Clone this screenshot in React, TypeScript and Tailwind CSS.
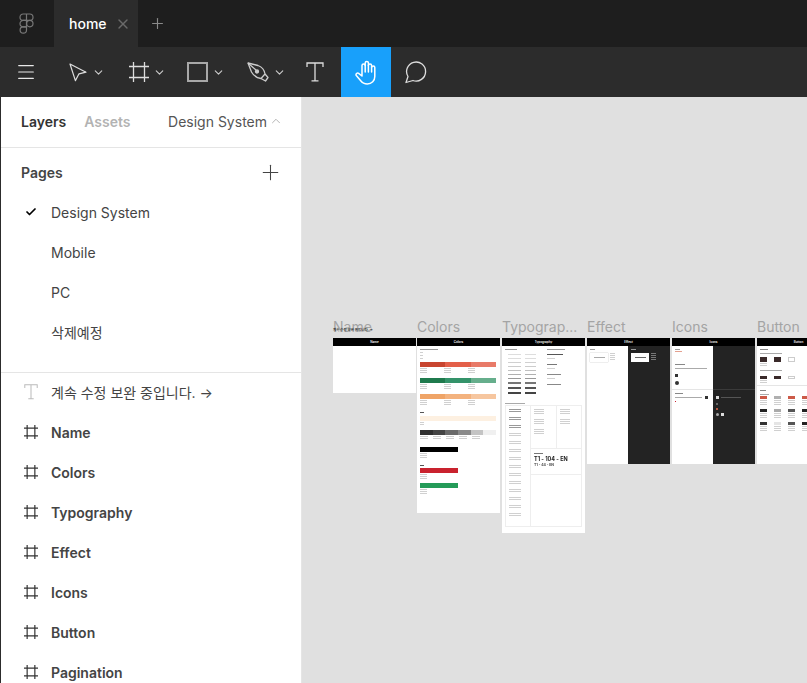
import React from 'react';
import { Check, ChevronDown, ChevronUp, Menu, Plus, X } from 'lucide-react';

const FONT = "font-['Inter','Noto_Sans_CJK_KR',sans-serif]";

const pages = ['Design System', 'Mobile', 'PC', '삭제예정'];
const layers = ['Name', 'Colors', 'Typography', 'Effect', 'Icons', 'Button', 'Pagination'];

// toolbar glyphs that lucide doesn't have in the right shape
const FigmaLogo = () => (
  <svg width="15" height="21" viewBox="0 0 15 21" fill="none" stroke="#777" strokeWidth="1.2">
    <path d="M7.500 1H4.200a3.200 3.200 0 0 0 0 6.400h3.300V1zM7.500 1h3.300a3.200 3.200 0 0 1 0 6.400H7.500V1z" />
    <path d="M7.500 7.400H4.200a3.200 3.200 0 0 0 0 6.400h3.300V7.400z" />
    <circle cx="10.800" cy="10.600" r="3.200" />
    <path d="M7.500 13.800H4.200a3.200 3.200 0 1 0 3.300 3.200v-3.200z" />
  </svg>
);

const MoveIcon = () => (
  <svg width="18" height="19" viewBox="0 0 18 19" fill="none" stroke="#ddd" strokeWidth="1.2" strokeLinejoin="round">
    <path d="M1 1l16 8.200-7 1.600-3.600 6.800L1 1z" />
  </svg>
);

const FrameIcon = ({ size = 20, color = '#ddd' }: { size?: number; color?: string }) => (
  <svg width={size} height={size} viewBox="0 0 20 20" fill="none" stroke={color} strokeWidth={size < 20 ? 1.7 : 1.3}>
    <path d="M0 4.500h20M0 15.500h20M4.500 0v20M15.500 0v20" />
  </svg>
);

const PenIcon = () => (
  <svg width="22" height="21" viewBox="0 0 22 21" fill="none" stroke="#ccc" strokeWidth="1.3" strokeLinejoin="round">
    <path d="M1 1l10 2.500c4 1.500 6.500 5 7 8.500l-4 4.500c-4-.5-7.500-3-9.500-6.500L1 1z" />
    <path d="M1 1l8 7" />
    <circle cx="10" cy="9.500" r="1.500" fill="#ccc" />
    <path d="M18 12l3 3.500-2.500 3.500-4.500-2.500" />
  </svg>
);

const TextIcon = ({ size = 18, color = '#ddd' }: { size?: number; color?: string }) => (
  <svg width={size} height={size * 1.11} viewBox="0 0 18 20" fill="none" stroke={color} strokeWidth="1.3">
    <path d="M1 5V1h16v4M9 1v18M5.500 19h7" />
  </svg>
);

const HandIcon = () => (
  <svg width="23" height="25" viewBox="0 0 23 25" fill="none" stroke="#fff" strokeWidth="1.500" strokeLinejoin="round" strokeLinecap="round">
    <path d="M7 16V5.500a1.600 1.600 0 0 1 3.200 0V3a1.600 1.600 0 0 1 3.200 0v2.500a1.600 1.600 0 0 1 3.200 0V7.500a1.600 1.600 0 0 1 3.200 0v9c0 4.200-3 7.500-7.500 7.500-3.200 0-5-1.200-6.800-3.500L1.300 15.500c-.9-1.300.9-3.200 2.300-2.200L7 16z" />
    <path d="M10.200 5.500V12M13.400 5.500V12M16.600 7.500V12" />
  </svg>
);

const CommentIcon = () => (
  <svg width="23" height="23" viewBox="0 0 23 23" fill="none" stroke="#ddd" strokeWidth="1.300" strokeLinejoin="round">
    <path d="M1 21.500l2-6A9.500 9.500 0 1 1 8 19.500l-7 2z" />
  </svg>
);

const ToolButton = ({ width, children, chevron }: { width: string; children: React.ReactNode; chevron?: string }) => (
  <div className={`flex items-center h-full ${width} ${chevron ? '' : 'justify-center'}`}>
    {children}
    {chevron && <ChevronDown size={13} color="#ccc" strokeWidth={2} className={chevron} />}
  </div>
);

// grey hairlines standing in for the unreadable text inside the thumbnails
const Lines = ({ n, w = 'w-[12px]', tone = 'bg-[#d0d0d0]', gap = 'gap-[1px]' }: { n: number; w?: string; tone?: string; gap?: string }) => (
  <div className={`flex flex-col ${gap}`}>
    {Array.from({ length: n }).map((_, i) => (
      <div key={i} className={`h-[1px] ${w} ${tone}`} />
    ))}
  </div>
);

const Swatch = ({ colors, w = 'w-[76px]' }: { colors: string[]; w?: string }) => (
  <div className={`flex h-[5px] ${w}`}>
    {colors.map((c) => (
      <div key={c} className="flex-1" style={{ backgroundColor: c }} />
    ))}
  </div>
);

const ThreeCaptions = () => (
  <div className="flex gap-[17px] mt-[1px]">
    <Lines n={3} w="w-[7px]" />
    <Lines n={3} w="w-[7px]" />
    <Lines n={3} w="w-[7px]" />
  </div>
);

const Frame = ({ name, left, height, title, children }: {
  name: string;
  left: string;
  height: string;
  title: string;
  children?: React.ReactNode;
}) => (
  <div className={`absolute top-[318px] w-[83px] ${left}`}>
    <div className="h-[20px] text-[14px] leading-[17px] text-[#a4a4a4] whitespace-nowrap">{name}</div>
    <div className={`relative bg-white overflow-hidden ${height}`}>
      <div className="h-[8px] bg-black flex items-center justify-center text-[3px] leading-[8px] font-semibold text-white">
        {title}
      </div>
      {children}
    </div>
  </div>
);

const ColorsBody = () => (
  <div className="flex flex-col px-[3px] pt-[3px] blur-[0.3px]">
    <Lines n={1} w="w-[18px]" tone="bg-[#999]" />
    <Lines n={3} w="w-[3px]" gap="gap-[2px] mt-[2px]" />
    <div className="mt-[3px]"><Swatch colors={['#c8452f', '#e35f49', '#e87a68']} /></div>
    <ThreeCaptions />
    <div className="mt-[5px]"><Swatch colors={['#1f7a4d', '#34936a', '#66ae8c']} /></div>
    <ThreeCaptions />
    <div className="mt-[5px]"><Swatch colors={['#efa467', '#f3b27e', '#f6c69f']} /></div>
    <ThreeCaptions />
    <div className="mt-[7px]"><Lines n={1} w="w-[4px]" tone="bg-[#555]" /></div>
    <div className="mt-[3px] h-[5px] w-[76px] bg-[#fdf0e1]" />
    <div className="mt-[1px]"><Lines n={2} w="w-[4px]" /></div>
    <div className="mt-[5px] flex h-[5px] w-[76px]">
      <div className="flex-1 bg-[#2f2f2f]" />
      <div className="flex-1 bg-[#444]" />
      <div className="flex-1 bg-[#6a6a6a]" />
      <div className="flex-1 bg-[#8a8a8a]" />
      <div className="flex-1 bg-[#c4c4c4]" />
      <div className="flex-1 bg-[#f0f0f0]" />
    </div>
    <div className="flex gap-[5px] mt-[1px]">
      <Lines n={2} w="w-[8px]" />
      <Lines n={2} w="w-[8px]" />
      <Lines n={2} w="w-[8px]" />
      <Lines n={2} w="w-[8px]" />
      <Lines n={2} w="w-[8px]" />
    </div>
    <div className="mt-[8px] h-[5px] w-[38px] bg-black" />
    <div className="mt-[1px]"><Lines n={3} w="w-[7px]" /></div>
    <div className="mt-[7px]"><Lines n={1} w="w-[4px]" tone="bg-[#555]" /></div>
    <div className="mt-[2px] h-[5px] w-[38px] bg-[#c9222e]" />
    <div className="mt-[1px]"><Lines n={3} w="w-[7px]" /></div>
    <div className="mt-[4px] h-[5px] w-[38px] bg-[#249b58]" />
    <div className="mt-[1px]"><Lines n={3} w="w-[7px]" /></div>
  </div>
);

// type scale list in the thumbnail: rows get heavier towards the bottom
const scale = [
  'bg-[#ddd]', 'bg-[#ddd]', 'bg-[#d0d0d0]', 'bg-[#ccc]', 'bg-[#c0c0c0]', 'bg-[#b0b0b0]',
  'bg-[#999]', 'bg-[#777]', 'bg-[#555]', 'bg-[#444]',
];

const ScaleColumn = ({ w, from }: { w: string; from: number }) => (
  <div className="flex flex-col gap-[3px]">
    {scale.map((tone, i) => (
      <div key={tone + i} className={`${w} ${tone} ${i >= from ? 'h-[2px]' : 'h-[1px]'}`} />
    ))}
  </div>
);

const TypographyBody = () => (
  <div className="flex flex-col px-[3px] pt-[3px]">
    <div className="flex gap-[3px] h-[54px] blur-[0.4px]">
      <div className="w-[38px] flex flex-col">
        <Lines n={1} w="w-[12px]" tone="bg-[#999]" />
        <div className="flex gap-[4px] mt-[4px] pl-[3px]">
          <ScaleColumn w="w-[13px]" from={7} />
          <ScaleColumn w="w-[11px]" from={7} />
        </div>
      </div>
      <div className="flex-1 flex flex-col pl-[1px]">
        <Lines n={1} w="w-[18px]" tone="bg-[#999]" />
        <div className="mt-[4px] flex flex-col gap-[3px]">
          <Lines n={1} w="w-[16px]" tone="bg-[#555]" />
          <Lines n={1} w="w-[8px]" tone="bg-[#d0d0d0]" />
          <div className="mt-[2px]"><Lines n={1} w="w-[10px]" tone="bg-[#777]" /></div>
          <Lines n={1} w="w-[8px]" tone="bg-[#d0d0d0]" />
          <div className="mt-[2px]"><Lines n={1} w="w-[14px]" tone="bg-[#888]" /></div>
          <Lines n={1} w="w-[8px]" tone="bg-[#d0d0d0]" />
          <div className="mt-[2px]"><Lines n={1} w="w-[14px]" tone="bg-[#888]" /></div>
        </div>
      </div>
    </div>
    <div className="blur-[0.3px]"><Lines n={1} w="w-[20px]" tone="bg-[#aaa]" /></div>
    <div className="mt-[1px] flex border border-[#eee] h-[122px] w-[77px]">
      <div className="w-[25px] border-r border-[#eee] pl-[3px] pt-[3px] flex flex-col gap-[5px] blur-[0.3px]">
        {Array.from({ length: 14 }).map((_, i) => (
          <Lines key={i} n={2} w="w-[12px]" tone={i < 3 ? 'bg-[#999]' : 'bg-[#d0d0d0]'} />
        ))}
      </div>
      <div className="flex-1 flex flex-col">
        <div className="flex h-[43px] border-b border-[#eee] shrink-0">
          <div className="w-[26px] border-r border-[#eee] pl-[3px] pt-[3px] flex flex-col gap-[5px] blur-[0.3px]">
            <Lines n={3} w="w-[10px]" />
            <Lines n={3} w="w-[10px]" />
            <Lines n={3} w="w-[10px]" />
          </div>
          <div className="flex-1 pl-[3px] pt-[3px] flex flex-col gap-[5px] blur-[0.3px]">
            <Lines n={3} w="w-[10px]" />
            <Lines n={3} w="w-[10px]" />
          </div>
        </div>
        <div className="h-[26px] border-b border-[#eee] shrink-0 pl-[3px] pt-[4px] flex flex-col blur-[0.2px]">
          <Lines n={1} w="w-[9px]" tone="bg-[#777]" />
          <span className="text-[5.5px] leading-[8px] font-bold text-[#222] whitespace-nowrap mt-[1px]">T1 - 104 - EN</span>
          <span className="text-[3.5px] leading-[5px] font-bold text-[#444] whitespace-nowrap">T1 - 44 - EN</span>
        </div>
      </div>
    </div>
  </div>
);

const EffectBody = () => (
  <div className="absolute inset-x-0 top-[8px] bottom-0 flex">
    <div className="w-[41px] bg-white pl-[3px] pt-[3px]">
      <Lines n={1} w="w-[5px]" tone="bg-[#999]" />
      <div className="flex gap-[2px] mt-[3px]">
        <div className="w-[18px] h-[9px] bg-white shadow-[0_0_1px_rgba(0,0,0,0.4)] flex items-center justify-center">
          <div className="h-[1px] w-[11px] bg-[#aaa]" />
        </div>
        <Lines n={4} w="w-[5px]" />
      </div>
    </div>
    <div className="flex-1 bg-[#232323] pl-[3px] pt-[3px]">
      <Lines n={1} w="w-[5px]" tone="bg-[#999]" />
      <div className="flex gap-[2px] mt-[3px]">
        <div className="w-[18px] h-[9px] bg-white flex items-center justify-center">
          <div className="h-[1px] w-[11px] bg-[#666]" />
        </div>
        <Lines n={4} w="w-[5px]" tone="bg-[#777]" />
      </div>
    </div>
  </div>
);

const IconsBody = () => (
  <div className="absolute inset-x-0 top-[8px] bottom-0 flex">
    <div className="w-[41px] bg-white pl-[3px] pt-[3px] flex flex-col">
      <Lines n={1} w="w-[5px]" tone="bg-[#999]" />
      <div className="h-[1px] w-[7px] bg-[#e4a08f] mt-[1px]" />
      <div className="mt-[12px]"><Lines n={1} w="w-[10px]" tone="bg-[#888]" /></div>
      <div className="mt-[3px]"><Lines n={1} w="w-[32px]" tone="bg-[#aaa]" /></div>
      <div className="mt-[5px] h-[3px] w-[3px] bg-[#333]" />
      <div className="mt-[4px] h-[4px] w-[4px] rounded-full bg-[#333]" />
      <div className="mt-[4px] -ml-[3px] h-[1px] bg-[#e5e5e5]" />
      <div className="mt-[3px]"><Lines n={1} w="w-[8px]" tone="bg-[#888]" /></div>
      <div className="mt-[2px] flex items-center gap-[3px]">
        <Lines n={1} w="w-[27px]" tone="bg-[#aaa]" />
        <div className="h-[3px] w-[3px] bg-[#333]" />
      </div>
      <div className="mt-[2px] h-[1px] w-[1px] bg-[#c9222e]" />
    </div>
    <div className="flex-1 bg-[#232323] pl-[3px] flex flex-col pt-[43px]">
      <div className="h-[1px] -ml-[3px] bg-[#3a3a3a]" />
      <div className="mt-[6px] flex items-center gap-[2px]">
        <div className="h-[3px] w-[3px] bg-[#ddd]" />
        <Lines n={1} w="w-[20px]" tone="bg-[#555]" />
      </div>
      <div className="mt-[4px] h-[2px] w-[2px] bg-[#666]" />
      <div className="mt-[3px] h-[2px] w-[2px] bg-[#b5553f]" />
      <div className="mt-[3px] flex gap-[2px]">
        <div className="h-[3px] w-[3px] rounded-full bg-[#aaa]" />
        <div className="h-[3px] w-[3px] bg-[#ddd]" />
      </div>
    </div>
  </div>
);

const ButtonSet = ({ colors }: { colors: string[] }) => (
  <div className="flex gap-[7px]">
    {colors.map((c, i) => (
      <div key={i} className="flex flex-col gap-[1px]">
        <div className="h-[3px] w-[7px]" style={{ backgroundColor: c }} />
        <Lines n={3} w="w-[7px]" />
      </div>
    ))}
  </div>
);

const SizeRow = ({ h }: { h: string }) => (
  <div className="flex gap-[7px]">
    <div className={`${h} w-[7px] bg-[#3a2a2a]`} />
    <div className={`${h} w-[7px] bg-[#3a2a2a]`} />
    <div className={`${h} w-[7px] border border-[#ccc]`} />
  </div>
);

const ButtonBody = () => (
  <div className="flex flex-col pl-[3px] pt-[3px] blur-[0.2px]">
    <Lines n={1} w="w-[8px]" tone="bg-[#888]" />
    <div className="mt-[3px]"><Lines n={1} w="w-[22px]" tone="bg-[#aaa]" /></div>
    <div className="mt-[3px]"><SizeRow h="h-[5px]" /></div>
    <div className="mt-[1px]"><Lines n={2} w="w-[7px]" /></div>
    <div className="mt-[4px]"><Lines n={1} w="w-[22px]" tone="bg-[#aaa]" /></div>
    <div className="mt-[5px]"><SizeRow h="h-[3px]" /></div>
    <div className="mt-[1px]"><Lines n={2} w="w-[7px]" /></div>
    <div className="mt-[2px] -ml-[3px] h-[1px] bg-[#e5e5e5]" />
    <div className="mt-[4px]"><Lines n={1} w="w-[6px]" tone="bg-[#888]" /></div>
    <div className="mt-[3px]"><Lines n={1} w="w-[9px]" tone="bg-[#aaa]" /></div>
    <div className="mt-[1px]"><ButtonSet colors={['#cc5a48', '#b0b0b0', '#cc5a48', '#cc5a48']} /></div>
    <div className="mt-[4px]"><ButtonSet colors={['#222', '#aaa', '#555', '#222']} /></div>
    <div className="mt-[4px]"><ButtonSet colors={['#333', '#e5e5e5', '#555', '#222']} /></div>
  </div>
);

const App: React.FC = () => {
  return (
    <div className={`w-[807px] h-[683px] overflow-hidden flex flex-col bg-[#e0e0e0] ${FONT}`}>
      {/* tab strip */}
      <div className="h-[47px] shrink-0 bg-[#1e1e1e] flex items-stretch">
        <div className="w-[54px] flex items-center justify-center pr-[1px]">
          <FigmaLogo />
        </div>
        <div className="w-[84px] bg-[#2c2c2c] flex items-center pl-[15px]">
          <span className="text-[14px] font-medium text-white">home</span>
          <X size={16} color="#6a6a6a" strokeWidth={2} className="ml-[8px]" />
        </div>
        <div className="w-[38px] flex items-center justify-center">
          <Plus size={17} color="#8a8a8a" strokeWidth={1.6} />
        </div>
      </div>

      {/* toolbar */}
      <div className="h-[50px] shrink-0 bg-[#2c2c2c] flex items-center">
        <ToolButton width="w-[52px]"><Menu size={22} color="#e8e8e8" strokeWidth={1.2} /></ToolButton>
        <ToolButton width="w-[64px] pl-[17px]" chevron="ml-[5px]"><MoveIcon /></ToolButton>
        <ToolButton width="w-[58px] pl-[13px]" chevron="ml-[4px]"><FrameIcon /></ToolButton>
        <ToolButton width="w-[58px] pl-[13px]" chevron="ml-[4px]"><div className="w-[21px] h-[20px] border-2 border-[#a8a8a8]" /></ToolButton>
        <ToolButton width="w-[63px] pl-[15px]" chevron="ml-[4px]"><PenIcon /></ToolButton>
        <ToolButton width="w-[46px] pr-[6px]"><TextIcon /></ToolButton>
        <div className="w-[50px] h-full bg-[#18a0fb] flex items-center justify-center">
          <HandIcon />
        </div>
        <ToolButton width="w-[50px]"><CommentIcon /></ToolButton>
      </div>

      <div className="flex-1 min-h-0 flex relative">
        {/* left panel */}
        <aside className="w-[302px] shrink-0 bg-white border-l border-l-[#2c2c2c] border-r border-r-[#e5e5e5] flex flex-col overflow-hidden">
          <div className="h-[51px] shrink-0 border-b border-[#e5e5e5] flex items-center pb-[2px] pl-[20px] pr-[18px] text-[14px]">
            <span className="font-semibold text-[#333]">Layers</span>
            <span className="font-semibold text-[#b3b3b3] ml-[18px]">Assets</span>
            <span className="ml-auto text-[#555] flex items-center gap-[2px]">
              Design System
              <ChevronUp size={14} color="#aaa" strokeWidth={1.5} />
            </span>
          </div>
          <div className="h-[50px] shrink-0 flex items-center justify-between pb-[2px] pl-[20px] pr-[18px]">
            <span className="text-[14px] font-semibold text-[#444]">Pages</span>
            <Plus size={25} color="#444" strokeWidth={1} />
          </div>
          <ul className="shrink-0 pb-[20px] -mt-[6px] border-b border-[#e5e5e5]">
            {pages.map((p, i) => (
              <li key={p} className="h-[40px] flex items-center text-[14px] text-[#444]">
                <span className="w-[50px] flex justify-center pl-[10px]">
                  {i === 0 && <Check size={12} color="#000" strokeWidth={3.5} />}
                </span>
                {p}
              </li>
            ))}
          </ul>
          <ul className="shrink-0 -mt-[1px]">
            <li className="h-[40px] flex items-center text-[14px] text-[#444]">
              <span className="w-[50px] flex justify-center pl-[10px]"><TextIcon size={14} color="#bbb" /></span>
              계속 수정 보완 중입니다. →
            </li>
            {layers.map((l) => (
              <li key={l} className="h-[40px] flex items-center text-[14px] font-semibold text-[#444]">
                <span className="w-[50px] flex justify-center pl-[10px]"><FrameIcon size={14} color="#333" /></span>
                {l}
              </li>
            ))}
          </ul>
        </aside>

        {/* canvas, coordinates are relative to the page so frames sit at their place */}
        <div className="absolute left-0 -top-[97px] w-[807px] h-[683px] pointer-events-none">
          <Frame name="Name" title="Name" left="left-[333px]" height="h-[55px]" />
          <div className="absolute left-[333px] top-[328px] text-[3.5px] leading-[5px] font-bold text-[#333] whitespace-nowrap">
            계속 수정 보완 중입니다. →
          </div>
          <Frame name="Colors" title="Colors" left="left-[417px]" height="h-[175px]"><ColorsBody /></Frame>
          <Frame name="Typograp..." title="Typography" left="left-[502px]" height="h-[195px]"><TypographyBody /></Frame>
          <Frame name="Effect" title="Effect" left="left-[587px]" height="h-[126px]"><EffectBody /></Frame>
          <Frame name="Icons" title="Icons" left="left-[672px]" height="h-[126px]"><IconsBody /></Frame>
          <Frame name="Button" title="Button" left="left-[757px]" height="h-[126px]"><ButtonBody /></Frame>
        </div>
      </div>
    </div>
  );
};

export default App;
